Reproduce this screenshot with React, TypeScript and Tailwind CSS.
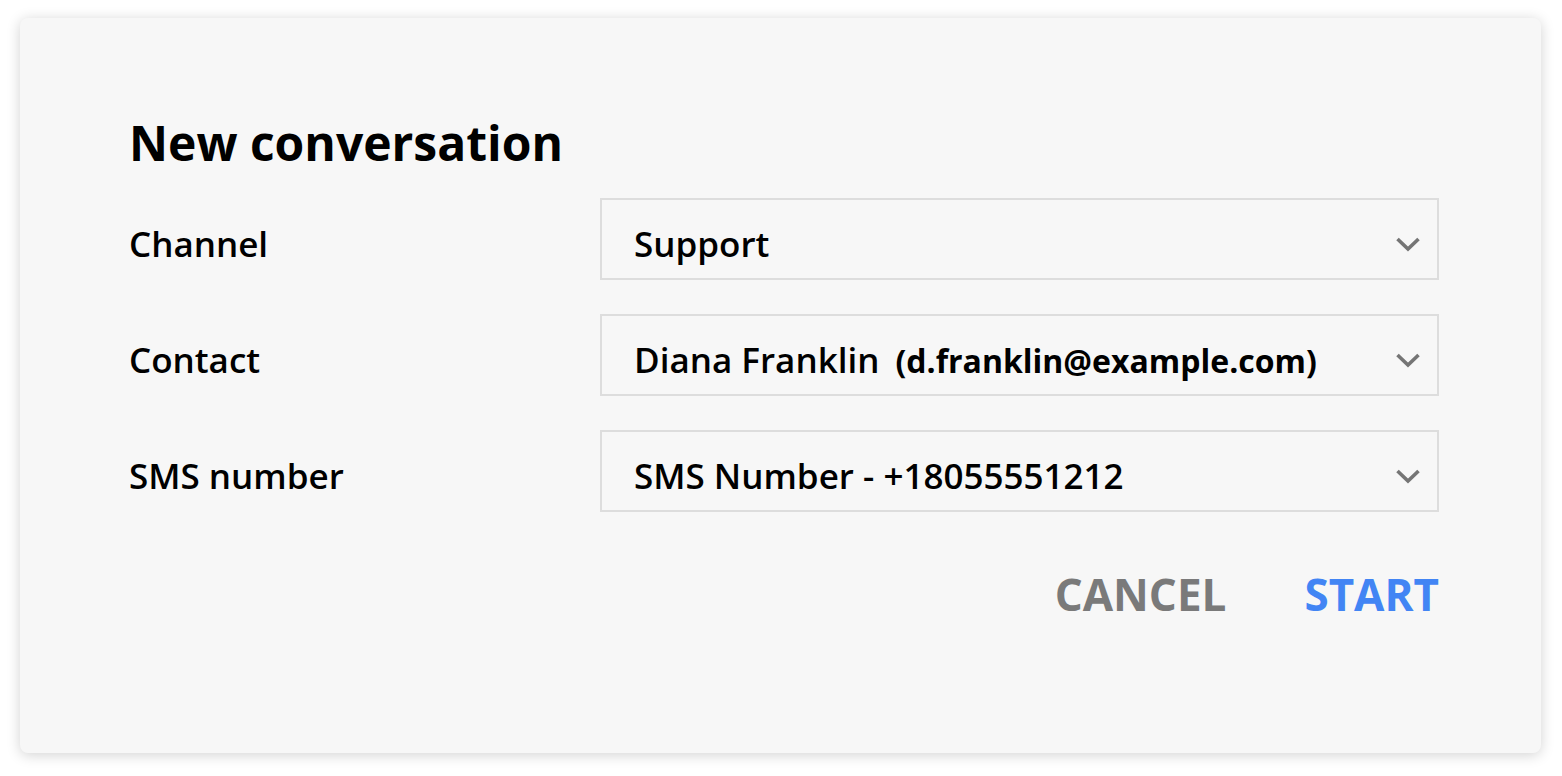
const font = { fontFamily: "'Open Sans', 'Noto Sans', sans-serif" };

function Chevron() {
  return (
    <svg width="26" height="16" viewBox="0 0 26 16" className="mt-[10px] shrink-0">
      <path d="M2.5 3 L13 13 L23.5 3" fill="none" stroke="#757575" strokeWidth="3.6" />
    </svg>
  );
}

function SelectBox({ children }: { children: React.ReactNode }) {
  return (
    <div className="flex h-[82px] w-[839px] items-center justify-between border-2 border-[#dddddd] bg-[#f7f7f7] pl-[32px] pr-[16px]">
      <div className="flex items-baseline pt-[10px] text-[35px] font-semibold text-black">{children}</div>
      <Chevron />
    </div>
  );
}

function Row({ label, children }: { label: string; children: React.ReactNode }) {
  return (
    <div className="flex items-center">
      <div className="w-[471px] pt-[10px] text-[35px] font-semibold text-black">{label}</div>
      <SelectBox>{children}</SelectBox>
    </div>
  );
}

export default function App() {
  return (
    <div className="min-h-screen bg-white pl-[20px] pt-[18px]" style={font}>
      <div className="h-[735px] w-[1521px] rounded-[8px] bg-[#f7f7f7] pl-[109px] pt-[89px] shadow-[0_2px_14px_rgba(0,0,0,0.18)]">
        <h1 className="h-[72px] text-[48px] font-bold leading-[72px] text-black">New conversation</h1>
        <div className="mt-[19px] flex flex-col gap-[34px]">
          <Row label="Channel">Support</Row>
          <Row label="Contact">
            Diana Franklin
            <span className="ml-[16px] text-[32px] font-bold">(d.franklin@example.com)</span>
          </Row>
          <Row label="SMS number">SMS Number - +18055551212</Row>
        </div>
        <div className="mt-[58px] flex w-[1310px] justify-end gap-[78px] text-[44px] font-bold leading-[48px]">
          <button className="text-[#7a7a7a]">CANCEL</button>
          <button className="text-[#4285f4]">START</button>
        </div>
      </div>
    </div>
  );
}
